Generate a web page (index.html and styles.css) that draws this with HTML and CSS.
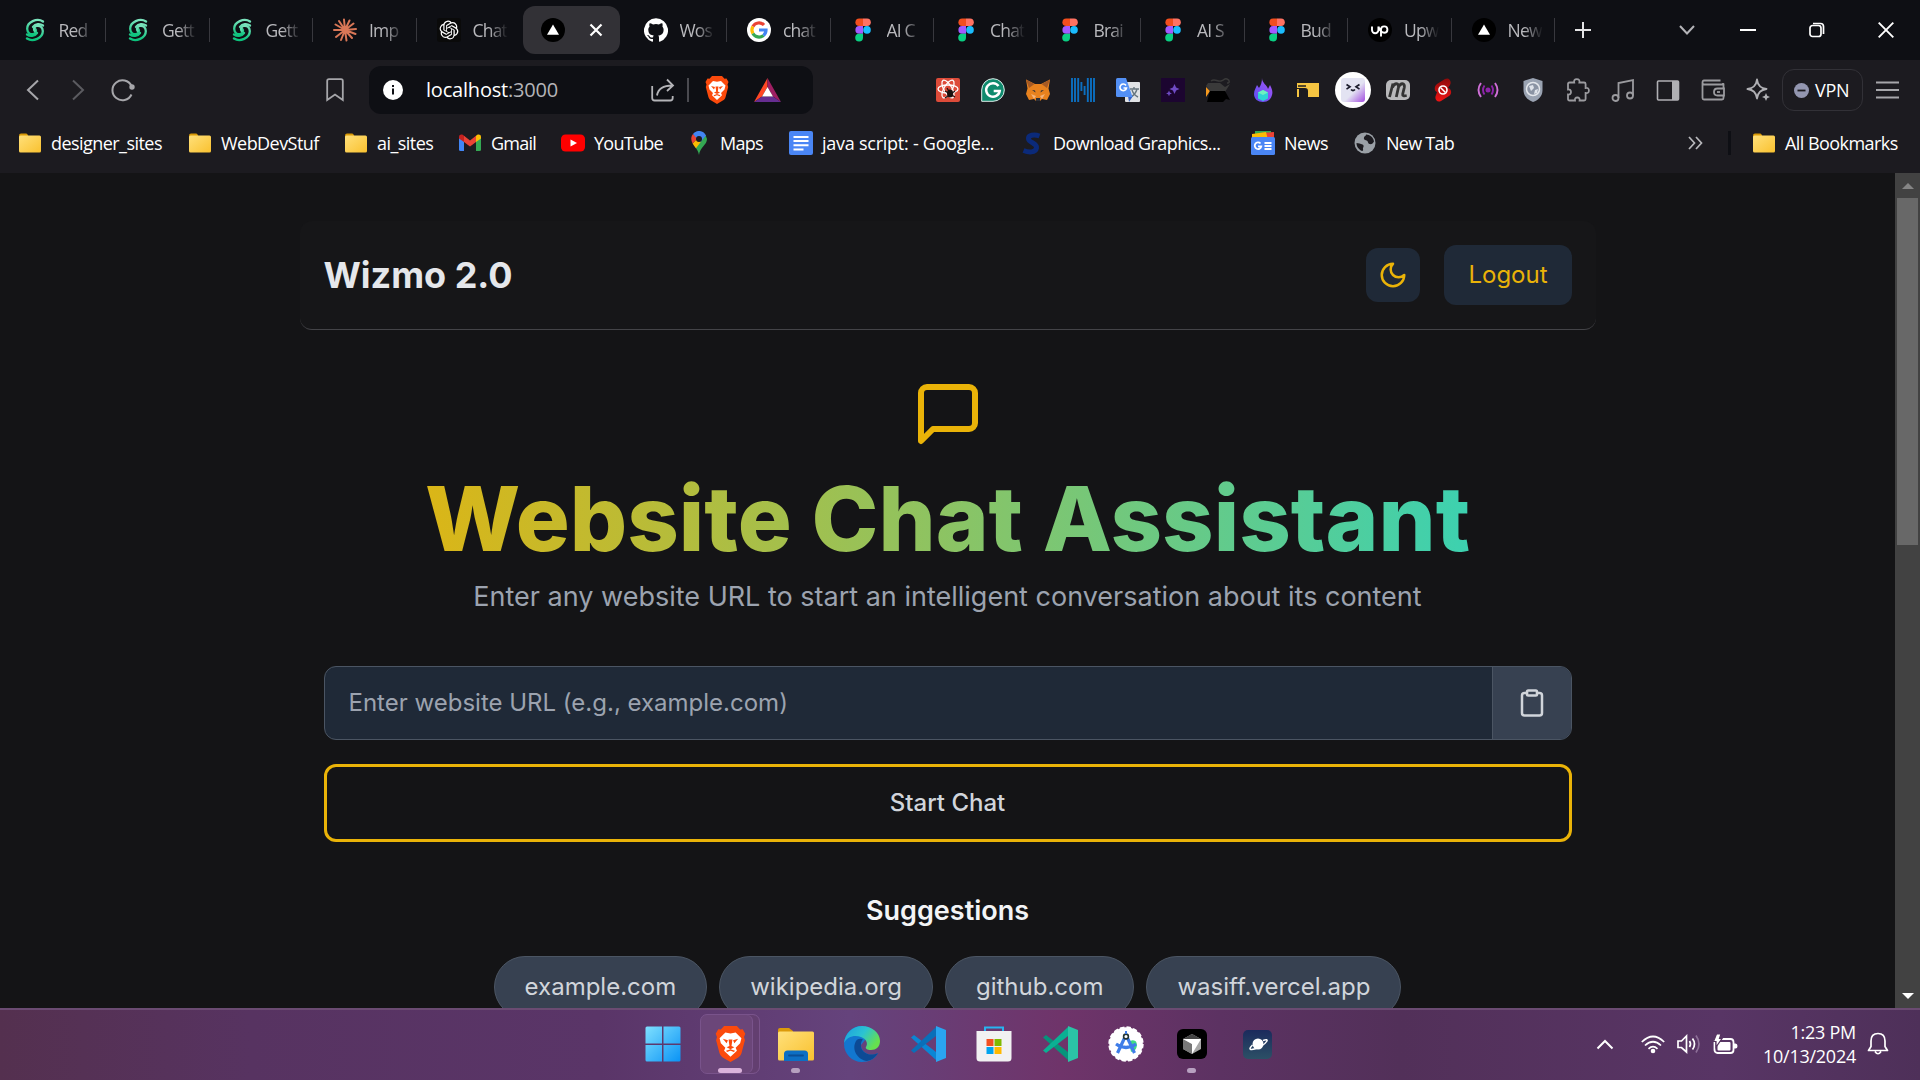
FILE: index.html
```html
<!DOCTYPE html>
<html lang="en">
<head>
<meta charset="utf-8">
<title>Wizmo 2.0</title>
<link rel="stylesheet" href="styles.css">
</head>
<body>
<svg class="defs" width="0" height="0">
  <defs>
    <linearGradient id="gGreen" x1="0" y1="0" x2="0" y2="1"><stop offset="0" stop-color="#7be3bd"/><stop offset="1" stop-color="#0bc27c"/></linearGradient>
    <linearGradient id="gFold" x1="0" y1="0" x2="1" y2="1"><stop offset="0" stop-color="#ffe07a"/><stop offset="1" stop-color="#f9c12f"/></linearGradient>
    <linearGradient id="gWin" x1="0" y1="0" x2="1" y2="1"><stop offset="0" stop-color="#7fe0ff"/><stop offset="1" stop-color="#0a93f5"/></linearGradient>
    <linearGradient id="gEdge" x1="0" y1="0" x2="1" y2=".5"><stop offset="0" stop-color="#1c9de0"/><stop offset=".55" stop-color="#2bc3d2"/><stop offset="1" stop-color="#66e04e"/></linearGradient>
    <linearGradient id="gFlame" x1="1" y1="0" x2="0" y2="1"><stop offset="0" stop-color="#a855f7"/><stop offset="1" stop-color="#5b4ff0"/></linearGradient>
    <linearGradient id="gBot" x1="0" y1="0" x2="1" y2="1"><stop offset=".55" stop-color="#e3e3f2"/><stop offset="1" stop-color="#a24be0"/></linearGradient>
    <linearGradient id="gSky" x1="0" y1="0" x2="0" y2="1"><stop offset="0" stop-color="#1b2a5c"/><stop offset="1" stop-color="#2c5066"/></linearGradient>
    <linearGradient id="gRed" x1="0" y1="0" x2="0" y2="1"><stop offset="0" stop-color="#8d0a0a"/><stop offset="1" stop-color="#f01313"/></linearGradient>
    <symbol id="swirl" viewBox="0 0 24 24"><g fill="none" stroke="url(#gGreen)" stroke-width="2.3" stroke-linecap="round"><path d="M20 3.500C14-.5 4 4 4.200 11c.1 3.800 3.300 6 6.300 5 2.600-.9 3-3.600 1.800-5"/><path d="M4 20.500c6 4 16-.5 15.800-7.500-.1-3.800-3.300-6-6.300-5-2.600.9-3 3.600-1.800 5"/><path d="M20 7.500c-3-2-7.500-2-10 1.500M4 16.500c3 2 7.500 2 10-1.500"/></g></symbol>
    <symbol id="claude" viewBox="0 0 24 24"><g stroke="#d97757" stroke-width="2" stroke-linecap="round"><path d="M12 12 11 1.500M12 12l4.500-9.500M12 12l8.500-6.500M12 12l11-1M12 12l10.500 4M12 12l7 8M12 12l1.500 10.500M12 12l-4 10M12 12l-9 7M12 12H1M12 12 2.500 6.500M12 12 6 3"/></g></symbol>
    <symbol id="gpt" viewBox="0 0 24 24"><rect width="24" height="24" rx="3" fill="#0a0a0a"/><g fill="#fff" transform="translate(2.600 2.600) scale(.783)"><path d="M22.280 9.820a5.980 5.980 0 0 0-.52-4.910 6.050 6.050 0 0 0-6.510-2.900A6.070 6.070 0 0 0 4.980 4.180a5.980 5.980 0 0 0-4 2.900 6.050 6.050 0 0 0 .74 7.100 5.980 5.980 0 0 0 .51 4.910 6.050 6.050 0 0 0 6.510 2.900A5.980 5.980 0 0 0 13.260 24a6.060 6.060 0 0 0 5.770-4.210 5.990 5.990 0 0 0 4-2.900 6.060 6.060 0 0 0-.75-7.070zm-9.020 12.610a4.480 4.480 0 0 1-2.880-1.040l.14-.08 4.780-2.760a.79.79 0 0 0 .39-.68v-6.740l2.020 1.170a.07.07 0 0 1 .04.05v5.580a4.500 4.500 0 0 1-4.490 4.490zm-9.660-4.130a4.470 4.470 0 0 1-.53-3.010l.14.090 4.780 2.760a.77.77 0 0 0 .78 0l5.840-3.370v2.330a.08.08 0 0 1-.03.06L9.740 19.950a4.500 4.500 0 0 1-6.140-1.650zM2.340 7.900a4.490 4.490 0 0 1 2.370-1.970V11.600a.77.77 0 0 0 .39.680l5.810 3.350-2.020 1.170a.08.08 0 0 1-.07 0l-4.830-2.790A4.500 4.500 0 0 1 2.340 7.900zm16.600 3.860L13.100 8.360l2.020-1.160a.08.08 0 0 1 .07 0l4.830 2.790a4.490 4.490 0 0 1-.68 8.100v-5.680a.79.79 0 0 0-.4-.65zm2.010-3.020l-.14-.09-4.770-2.780a.78.78 0 0 0-.79 0L9.410 9.230V6.900a.07.07 0 0 1 .03-.06l4.830-2.790a4.500 4.500 0 0 1 6.680 4.690zM8.310 12.860l-2.020-1.160a.08.08 0 0 1-.04-.06V6.070a4.500 4.500 0 0 1 7.380-3.450l-.14.080-4.780 2.760a.79.79 0 0 0-.4.680zm1.100-2.360l2.600-1.500 2.610 1.500v3l-2.600 1.500-2.610-1.500z"/></g></symbol>
    <symbol id="vercel" viewBox="0 0 24 24"><circle cx="12" cy="12" r="12" fill="#000"/><path d="M12 6.500l6 10.300H6z" fill="#fff"/></symbol>
    <symbol id="github" viewBox="0 0 24 24"><path fill="#fff" d="M12 .3a12 12 0 0 0-3.800 23.400c.6.1.8-.3.8-.6v-2.200c-3.300.7-4-1.400-4-1.400-.6-1.400-1.400-1.800-1.400-1.800-1-.7.1-.7.1-.7 1.200.1 1.900 1.200 1.900 1.200 1 1.800 2.800 1.300 3.500 1 0-.8.400-1.300.700-1.600-2.700-.3-5.500-1.300-5.500-6 0-1.200.5-2.300 1.300-3.100-.2-.4-.6-1.600 0-3.200 0 0 1-.3 3.400 1.200a11.500 11.500 0 0 1 6 0c2.300-1.500 3.300-1.200 3.300-1.200.6 1.600.2 2.800.1 3.200.7.8 1.200 1.900 1.200 3.200 0 4.600-2.800 5.600-5.500 5.900.5.400.9 1.100.9 2.200v3.300c0 .3.100.7.800.6A12 12 0 0 0 12 .3"/></symbol>
    <symbol id="google" viewBox="0 0 24 24"><circle cx="12" cy="12" r="12" fill="#fff"/><g fill="none" stroke-width="3.200"><path stroke="#ea4335" d="M5.900 8.500A7 7 0 0 1 17 7"/><path stroke="#fbbc05" d="M5.900 15.500a7 7 0 0 1 0-7"/><path stroke="#34a853" d="M16.500 17.400a7 7 0 0 1-10.600-1.900"/><path stroke="#4285f4" d="M12 12h7c0 2.400-1 4.200-2.500 5.400"/></g></symbol>
    <symbol id="figma" viewBox="0 0 24 24"><path fill="#f24e1e" d="M12 .5H8.200a3.800 3.800 0 0 0 0 7.600H12z"/><path fill="#ff7262" d="M12 .5h4a3.800 3.800 0 0 1 0 7.600h-4z"/><path fill="#a259ff" d="M12 8.100H8.200a3.800 3.800 0 0 0 0 7.600H12z"/><circle cx="16" cy="11.900" r="3.800" fill="#1abcfe"/><path fill="#0acf83" d="M12 15.700H8.200a3.900 3.900 0 1 0 3.800 3.900z"/></symbol>
    <symbol id="folder" viewBox="0 0 24 24"><path fill="#d99a07" d="M1 4.500q0-2 2-2h5q1 0 1.500 1l1 2v3H1z"/><rect x="1" y="4.500" width="22" height="17" rx="1.500" fill="url(#gFold)"/></symbol>
    <symbol id="brave" viewBox="0 0 24 28"><path fill="#fb4a0c" d="M7 0h10l2.500 2.800 2-.3 2 3.500-1 2.500.7 2.500-2.600 10c-.5 1.800-1.500 2.800-2.800 3.600L12 28l-5.800-3.400C5 23.800 4 22.800 3.400 21L.8 11l.7-2.500L.5 6l2-3.500 2 .3z"/><path fill="#fff" d="M8 5l4 .8L16 5l4.500 4.500-1 4-3.500 3.500 1 2.200-5 4.800-5-4.800 1-2.200L4.500 13.500l-1-4z"/><path fill="#fb4a0c" d="M6 10l4 1-1 2.500zM18 10l-4 1 1 2.500zM10.500 10.500h3l-.7 5 2.200 1-3 1.500-3-1.500 2.200-1zM8.500 19.300l3.500-1.200 3.500 1.200-.8.900-2.700-.9-2.700.9z"/></symbol>
    <symbol id="vscode" viewBox="0 0 36 36"><path class="vs-a" d="M1 11.500l3-2.500 22 17v8z"/><path class="vs-b" d="M1 24.500L4 27 26 10V1z"/><path class="vs-c" d="M26 0l10 4v28l-10 4z"/></symbol>
  </defs>
</svg>

<div class="screen">
  <header class="tabstrip">
    <div class="tab"><svg class="i24"><use href="#swirl"/></svg><span>Red</span></div>
    <div class="tab"><svg class="i24"><use href="#swirl"/></svg><span>Gett</span></div>
    <div class="tab"><svg class="i24"><use href="#swirl"/></svg><span>Gett</span></div>
    <div class="tab"><svg class="i24"><use href="#claude"/></svg><span>Imp</span></div>
    <div class="tab no-line"><svg class="i24"><use href="#gpt"/></svg><span>Chat</span></div>
    <div class="tab active"><div class="pill"><svg class="i24"><use href="#vercel"/></svg><svg width="14" height="14" viewBox="0 0 14 14"><path d="M1.500 1.500l11 11m0-11l-11 11" stroke="#fff" stroke-width="2.200"/></svg></div></div>
    <div class="tab"><svg class="i24"><use href="#github"/></svg><span>Wos</span></div>
    <div class="tab"><svg class="i24"><use href="#google"/></svg><span>chat</span></div>
    <div class="tab"><svg class="i24"><use href="#figma"/></svg><span>AI C</span></div>
    <div class="tab"><svg class="i24"><use href="#figma"/></svg><span>Chat</span></div>
    <div class="tab"><svg class="i24"><use href="#figma"/></svg><span>Brai</span></div>
    <div class="tab"><svg class="i24"><use href="#figma"/></svg><span>AI S</span></div>
    <div class="tab"><svg class="i24"><use href="#figma"/></svg><span>Bud</span></div>
    <div class="tab"><svg class="i24" viewBox="0 0 24 24"><circle cx="12" cy="12" r="12" fill="#000"/><path d="M4 8.500v3.500a3.200 3.200 0 0 0 6.400 0V8.500m0 0c1 3 2 4.500 3.500 6M13 18.500v-7a3.200 3.200 0 1 1 3.200 3.300c-1.500 0-3-1-4-2.500" fill="none" stroke="#fff" stroke-width="1.900"/></svg><span>Upw</span></div>
    <div class="tab"><svg class="i24"><use href="#vercel"/></svg><span>New</span></div>
    <button class="newtab"><svg width="18" height="18" viewBox="0 0 18 18"><path d="M9 1v16M1 9h16" stroke="#e4e4e6" stroke-width="2"/></svg></button>
    <div class="win">
      <button class="w54"><svg width="16" height="10" viewBox="0 0 16 10"><path d="M1 1l7 7.500L15 1" fill="none" stroke="#b4b4b8" stroke-width="2"/></svg></button>
      <button><svg width="16" height="4"><rect y="1" width="16" height="2" fill="#fff"/></svg></button>
      <button><svg width="16" height="16" viewBox="0 0 16 16"><g fill="none" stroke="#fff" stroke-width="1.700"><rect x="1" y="3.500" width="11" height="11" rx="2.500"/><path d="M4 1.500h7.500q3 0 3 3V12"/></g></svg></button>
      <button><svg width="16" height="16" viewBox="0 0 16 16"><path d="M.7.7l14.600 14.600m0-14.600L.7 15.300" stroke="#fff" stroke-width="1.900"/></svg></button>
    </div>
  </header>

  <div class="toolbar">
    <div class="slot"><svg width="14" height="22" viewBox="0 0 14 22"><path d="M12 1.500L2 11l10 9.500" fill="none" stroke="#a6a6aa" stroke-width="2"/></svg></div>
    <div class="slot"><svg width="14" height="22" viewBox="0 0 14 22"><path d="M2 1.500L12 11 2 20.500" fill="none" stroke="#5b5b60" stroke-width="2"/></svg></div>
    <div class="slot"><svg width="24" height="24" viewBox="0 0 24 24"><path d="M20.500 16.500A10 10 0 1 1 20.500 8" fill="none" stroke="#a6a6aa" stroke-width="2"/><circle cx="21" cy="9" r="2.700" fill="#a6a6aa"/></svg></div>
    <div class="slot mark"><svg width="18" height="24" viewBox="0 0 18 24"><path d="M1.200 3q0-1.800 1.800-1.800h12q1.800 0 1.800 1.800v19L9 16.500 1.200 22z" fill="none" stroke="#a6a6aa" stroke-width="1.800"/></svg></div>
    <div class="url">
      <svg width="20" height="20" viewBox="0 0 20 20"><circle cx="10" cy="10" r="10" fill="#fff"/><path d="M10 8.500v6M10 5v2" stroke="#0f1015" stroke-width="2"/></svg>
      <span class="host">localhost<i>:3000</i></span>
      <svg class="share" width="24" height="24" viewBox="0 0 24 24"><path d="M1.200 8v12q0 2.500 2.500 2.500h15.500q2.500 0 2.500-2.500v-2M6 17.500C7 11 11 7.500 21.500 7.500M16 1.500l6 6-6 5.500" fill="none" stroke="#b4b4b8" stroke-width="1.800"/></svg>
      <b class="bar"></b>
      <svg width="24" height="28"><use href="#brave"/></svg>
      <svg class="bat" width="27" height="24" viewBox="0 0 27 24"><path fill="#ff4724" d="M13.500 0v9L8 18.500 0 24z"/><path fill="#9e1f63" d="M13.500 0L27 24l-8-5.500L13.500 9z"/><path fill="#662d91" d="M0 24l8-5.500h11L27 24z"/><path fill="#fff" d="M13.500 9l5.500 9.500H8z"/></svg>
    </div>
    <div class="ext">
      <div class="slot"><svg class="i24" viewBox="0 0 24 24"><rect width="24" height="24" rx="2" fill="#dd4b39"/><g fill="none" stroke="#fff" stroke-width="1.300"><ellipse cx="12" cy="11" rx="10" ry="4"/><ellipse cx="12" cy="11" rx="10" ry="4" transform="rotate(60 12 11)"/><ellipse cx="12" cy="11" rx="10" ry="4" transform="rotate(120 12 11)"/></g><ellipse cx="14" cy="15.500" rx="3" ry="4" fill="#1b1210"/><path d="M9 13l10 6M9 20l10-7M11 10l3 5" stroke="#1b1210" stroke-width="1.200"/></svg></div>
      <div class="slot"><svg class="i24" viewBox="0 0 24 24"><path d="M.7 23.300V12A11.300 11.300 0 1 1 12 23.300z" fill="#0e8a6d" stroke="#dfeeea" stroke-width="1"/><path d="M17.500 8A6.800 6.800 0 1 0 18.700 13h-6" fill="none" stroke="#fff" stroke-width="2.500"/></svg></div>
      <div class="slot"><svg class="i24" viewBox="0 0 24 24"><path fill="#e8821e" d="M0 1.500L9 6h6l9-4.500-1.500 9L24 16l-3 6-5-1-2 2h-4l-2-2-5 1-3-6 1.500-5.500z"/><path fill="#a65a24" d="M0 1.500L8.500 6 3 10zM24 1.500L15.500 6 21 10z"/><path fill="#f3b27a" d="M5 16l5 2-2 3zM19 16l-5 2 2 3z"/><path fill="#2d3038" d="M6 12l3 .5.5 2zM18 12l-3 .5-.5 2zM10 20h4v3h-4z"/></svg></div>
      <div class="slot"><svg class="i24" viewBox="0 0 24 24"><path d="M1 0v24M4 0v24M7.200 0v24M10.400 4v9M13.600 8v9M16.800 0v24M20 0v24M23 0v24" stroke="#0c6fc0" stroke-width="1.900"/></svg></div>
      <div class="slot"><svg class="i24" viewBox="0 0 24 24"><rect x="9" y="4" width="15" height="20" rx="1" fill="#e0e2e5"/><path d="M14 11h9M18 9v2m3 0c-1 4-3 6-6 8m1-7c1 3 4 6 6 7" stroke="#66757f" stroke-width="1.400" fill="none"/><path fill="#3563c8" d="M12 18h5l-4 6z"/><path fill="#5390f5" d="M1.500 0H10l6.500 19h-15Q0 19 0 17.500v-16Q0 0 1.500 0z"/><path d="M10 7.500A3.300 3.300 0 1 0 10.500 10H7.500" fill="none" stroke="#fff" stroke-width="1.600"/></svg></div>
      <div class="slot"><svg class="i24" viewBox="0 0 24 24"><rect width="24" height="24" fill="#1c0530"/><path fill="#6f4bc4" d="M13.500 6l1.600 3.400 3.400 1.600-3.400 1.600-1.600 3.400-1.600-3.400L8.500 11l3.400-1.600zM8 12.500l.9 2 2 .9-2 .9-.9 2-.9-2-2-.9 2-.9z"/></svg></div>
      <div class="slot"><svg class="i24" viewBox="0 0 24 24"><path fill="#f79a1e" d="M0 9l4 4-4 6z"/><path fill="#3a3a3a" d="M2 5h12l5 4 5-3-5 8H5L0 8z"/><path fill="#000" d="M4 13h15l5 9-4-1-3 3H1z"/><path d="M5 3c4-3 6 1 10 0s3-3 6-2 3 4 0 4" fill="none" stroke="#3a3a3a" stroke-width="1.400"/></svg></div>
      <div class="slot"><svg class="i24" viewBox="0 0 24 24"><path fill="url(#gFlame)" d="M11 0c0 5 5 7 6 11l2-4c2 4 3 7 2 10-1 4-4 7-9 7s-9-3-9-8c0-4 2-6 3-9l2 3c2-3 3-6 3-10z"/><path fill="#2dd4d4" d="M12 12l5 2.500v6L12 23l-5-2.500v-6z"/><path fill="#6ef0c0" d="M12 12l5 2.500-5 2.500-5-2.500z"/></svg></div>
      <div class="slot"><svg class="i24" viewBox="0 0 24 24"><path fill="#f5c542" d="M1 5h22v14H12v-6q0-3-3-3H1z"/><path d="M2 8h8m-5.500 11v-4q0-3 3-3t3 3v4" fill="none" stroke="#1c1c20" stroke-width="1.600"/><path fill="#f5c542" d="M1 11h2v8H1z"/></svg></div>
      <div class="slot"><svg class="i36" viewBox="0 0 36 36"><circle cx="18" cy="18" r="18" fill="#fff"/><rect x="6" y="6" width="24" height="24" rx="3" fill="url(#gBot)"/><path d="M11.500 12.500l3.500 2.300-3.500 2.300M24.500 12.500L21 14.800l3.500 2.300M16 17.500q2 2 4 0" fill="none" stroke="#1c1c2c" stroke-width="1.700"/></svg></div>
      <div class="slot"><svg class="i24" viewBox="0 0 24 24"><rect y="2" width="24" height="20" rx="5" fill="#b9b9bb"/><path d="M3.500 19L7 5.500m-.6 4c2-5 7-5 6 0L10.300 19m2-9.500c2-5 7-5 6 0l-1.600 6.500q-.5 2.500 4 1.500" fill="none" stroke="#333" stroke-width="2.800"/></svg></div>
      <div class="slot"><svg class="i24" viewBox="0 0 24 24"><path fill="url(#gRed)" d="M14 1c4-2 7 2 5 6l-2 3c4 1 4 6 1 8l-8 5c-4 2-7-2-5-6l1-3c-3-1-3-6 0-8z"/><circle cx="12" cy="12" r="4" fill="none" stroke="#fff" stroke-width="1.600"/><path d="M9.500 9.500l5 5" stroke="#fff" stroke-width="1.500"/></svg></div>
      <div class="slot"><svg class="i24" viewBox="0 0 24 24"><circle cx="12" cy="12" r="2.500" fill="#8e24aa"/><g fill="none" stroke-width="1.900"><path stroke="#8e24aa" d="M8.500 7.500q-3 4.500 0 9M15.500 7.500q3 4.500 0 9"/><path stroke="#d070d8" d="M5 5q-5 7 0 14M19 5q5 7 0 14"/></g></svg></div>
      <div class="slot"><svg class="i24" viewBox="0 0 24 24"><path fill="#9aa3b2" d="M12 0l9.500 3v9c0 6-4 10-9.500 12C6.500 22 2.500 18 2.500 12V3z"/><circle cx="12" cy="11" r="6.500" fill="#8b94a4" stroke="#e4e7ec" stroke-width="1.500"/><path fill="#dfe3ea" d="M8 8l4-1 1 3-3 3zM14 12l3-1-1 4-3 1z"/></svg></div>
      <div class="slot"><svg class="i24" viewBox="0 0 24 24"><path d="M2 6q0-1.500 1.500-1.500h4.700q-.7-3.300 2.600-3.300t2.600 3.300h4.700q1.500 0 1.500 1.500v4q3.300-.5 3.300 2.500t-3.300 2.500v6q0 1.500-1.500 1.500h-4.500q.5-3-2.300-3t-2.300 3H3.500Q2 22.500 2 21v-4.500q3 .3 3-2.500t-3-2.500z" fill="none" stroke="#9b9b9f" stroke-width="1.800"/></svg></div>
      <div class="slot"><svg class="i24" viewBox="0 0 24 24"><g fill="none" stroke="#9b9b9f" stroke-width="1.800"><circle cx="4.500" cy="20" r="3"/><circle cx="19" cy="17.500" r="3"/><path d="M7.500 20V5L22 2v15.500"/></g></svg></div>
      <div class="slot"><svg class="i24" viewBox="0 0 24 24"><rect x="1.500" y="3" width="21" height="19" rx="1" fill="none" stroke="#b0b0b4" stroke-width="1.600"/><path fill="#b0b0b4" d="M16 3h6.500v19H16z"/></svg></div>
      <div class="slot"><svg class="i24" viewBox="0 0 24 24"><g fill="none" stroke="#9b9b9f" stroke-width="1.800"><path d="M22 7.500V5M19.500 2.500H3q-1.500 0-1.500 2t1.500 2h19.500v4M1.500 4.500V20q0 1.500 1.500 1.500h18q1.500 0 1.500-1.500v-2.500"/><path d="M23 10.500h-6.500q-3.500 0-3.500 3.500t3.500 3.500H23z"/><path d="M16 14h3"/></g></svg></div>
      <div class="slot"><svg class="i24" viewBox="0 0 24 24"><path d="M11 1.500q1 8.500 9.500 9.500-8.500 1-9.500 9.500Q10 12 1.500 11 10 10 11 1.500z" fill="none" stroke="#b0b0b4" stroke-width="1.900" stroke-linejoin="round"/><path fill="#b0b0b4" d="M20 15l1.200 2.800L24 19l-2.800 1.200L20 23l-1.200-2.800L16 19l2.800-1.200z"/></svg></div>
    </div>
    <div class="vpn"><svg width="15" height="15"><circle cx="7.500" cy="7.500" r="7.500" fill="#9396b0"/><path d="M3.500 7.500h8" stroke="#1c1b20" stroke-width="1.800"/></svg><span>VPN</span></div>
    <div class="slot"><svg width="23" height="18"><path d="M0 1.500h23M0 9h23M0 16.500h23" stroke="#a6a6aa" stroke-width="2"/></svg></div>
  </div>

  <nav class="bookmarks">
    <a><svg class="i24"><use href="#folder"/></svg><span>designer_sites</span></a>
    <a><svg class="i24"><use href="#folder"/></svg><span>WebDevStuf</span></a>
    <a><svg class="i24"><use href="#folder"/></svg><span>ai_sites</span></a>
    <a><svg class="i24" viewBox="0 0 24 24"><path fill="#4285f4" d="M1 6l5 3.500V20H2.500Q1 20 1 18.500z"/><path fill="#34a853" d="M23 6l-5 3.500V20h3.500q1.500 0 1.500-1.500z"/><path fill="#ea4335" d="M6 4.800l6 4.600 6-4.600v6.200l-6 4.500L6 11z"/><path fill="#c5221f" d="M1 6c0-2.500 2.500-3 4-2l1 .8V11L1 7.500z"/><path fill="#fbbc04" d="M23 6c0-2.500-2.500-3-4-2l-1 .8V11l5-3.500z"/></svg><span class="snug">Gmail</span></a>
    <a><svg class="i24" viewBox="0 0 24 24"><rect y="3.500" width="24" height="17" rx="4.500" fill="#f00"/><path fill="#fff" d="M9.500 8.500v7l6.500-3.500z"/></svg><span class="snug">YouTube</span></a>
    <a><svg class="i24" viewBox="0 0 24 24"><path fill="#34a853" d="M20 8c0 6-7 8-8 16-.5-3-2-5.500-3.700-7.700L18.500 4z"/><path fill="#fbbc04" d="M9 17.200c-1.200-1.500-2.500-3-3.400-4.700l5-5.500 3.500 3.500z"/><path fill="#ea4335" d="M5.600 12.500C4 9 3.500 6 6 3l5 4z"/><path fill="#4285f4" d="M6 3c3.500-4.500 10.500-4 13 1.500L13.500 11 9 6.500z"/><circle cx="12" cy="8" r="3" fill="#1c1b20"/></svg><span class="snug">Maps</span></a>
    <a><svg class="i24" viewBox="0 0 24 24"><rect width="24" height="24" rx="2" fill="#4a86f5"/><path d="M4.500 6h15M4.500 10h15M4.500 14.300h15M4.500 18.500h10" stroke="#fff" stroke-width="2"/></svg><span class="loose">java script: - Google...</span></a>
    <a><svg class="i24" viewBox="0 0 24 24"><path d="M19.500 5C14 3 8 4 8.500 8s9 4 8 9-8 4.500-13 2.500" fill="none" stroke="#0b2a7a" stroke-width="5"/></svg><span>Download Graphics...</span></a>
    <a><svg class="i24" viewBox="0 0 24 24"><path fill="#34a853" d="M4 0h16v6H4z"/><path fill="#ea4335" d="M9 2l14-1v8H9z"/><path fill="#fbbc04" d="M1 3l14-2 2 8H1z"/><rect y="6" width="24" height="18" rx="1.500" fill="#4a86f5"/><path d="M9.500 12.500a3.300 3.300 0 1 0 .8 2.800H7M13.500 12h7M13.500 15h7M13.500 18h7" fill="none" stroke="#fff" stroke-width="1.800"/></svg><span>News</span></a>
    <a class="newtab-mark"><svg class="i24" viewBox="0 0 24 24"><circle cx="12" cy="12" r="10.500" fill="#9aa0a6"/><path fill="#1c1b20" d="M13 3.500c4 0 7.500 3 8 7-1 2-2.500 3-4.500 2.500s-1-3-3-3.500-3-1-2.500-3 2-1 2-3zM3.500 12c2 0 4 .5 6 1.500 2.500 1.500 0 3 .5 4.500s-.5 2-1 2C6 18.500 3.500 16 3.500 12z"/></svg><span class="snug">New Tab</span></a>
    <div class="more"><svg width="15" height="14" viewBox="0 0 15 14"><path d="M1 1l5.500 6L1 13M8 1l5.500 6L8 13" fill="none" stroke="#b8b8bc" stroke-width="1.700"/></svg></div>
    <a class="all"><svg class="i24"><use href="#folder"/></svg><span>All Bookmarks</span></a>
  </nav>

  <div class="viewport">
    <main>
      <div class="app-header">
        <h2>Wizmo 2.0</h2>
        <button class="theme"><svg width="30" height="30" viewBox="0 0 24 24" fill="none" stroke="#eab308" stroke-width="2" stroke-linecap="round" stroke-linejoin="round"><path d="M12 3a6 6 0 0 0 9 9 9 9 0 1 1-9-9Z"/></svg></button>
        <button class="logout">Logout</button>
      </div>
      <svg class="chat" width="72" height="72" viewBox="0 0 24 24" fill="none" stroke="#eab308" stroke-width="2" stroke-linecap="round" stroke-linejoin="round"><path d="M21 15a2 2 0 0 1-2 2H7l-4 4V5a2 2 0 0 1 2-2h14a2 2 0 0 1 2 2z"/></svg>
      <h1>Website Chat Assistant</h1>
      <p class="sub">Enter any website URL to start an intelligent conversation about its content</p>
      <div class="field">
        <span>Enter website URL (e.g., example.com)</span>
        <button><svg width="30" height="30" viewBox="0 0 24 24" fill="none" stroke="#d1d5db" stroke-width="2" stroke-linecap="round" stroke-linejoin="round"><rect x="8" y="2" width="8" height="4" rx="1"/><path d="M16 4h2a2 2 0 0 1 2 2v14a2 2 0 0 1-2 2H6a2 2 0 0 1-2-2V6a2 2 0 0 1 2-2h2"/></svg></button>
      </div>
      <button class="start">Start Chat</button>
      <h3>Suggestions</h3>
      <div class="chips"><span>example.com</span><span>wikipedia.org</span><span>github.com</span><span>wasiff.vercel.app</span></div>
    </main>
    <div class="scroll">
      <svg width="12" height="6"><path d="M0 6l6-6 6 6z" fill="#858585"/></svg>
      <div class="thumb"></div>
      <svg width="12" height="6"><path d="M0 0l6 6 6-6z" fill="#fff"/></svg>
    </div>
  </div>

  <footer class="taskbar">
    <div class="apps">
      <div><svg width="36" height="36" viewBox="0 0 36 36"><path fill="url(#gWin)" d="M2 .5h15v17H.5V2Q.5.500 2 .500zM18.500.500H34q1.500 0 1.500 1.500v15.500h-17zM.5 19H17v16.500H2Q.5 35.500.5 34zM18.500 19h17v15q0 1.500-1.500 1.500H18.500z"/></svg></div>
      <div class="current"><svg width="31" height="36"><use href="#brave"/></svg><b></b></div>
      <div class="open"><svg width="36" height="36" viewBox="0 0 36 36"><path fill="#dc9a0a" d="M0 4q0-2 2-2h9l4 3v4H0z"/><rect y="5.500" width="36" height="29" rx="1.500" fill="url(#gFold)"/><path fill="#0d6fc4" d="M6 35v-7q0-3.500 3.500-3.500h17q3.500 0 3.500 3.500v7z"/><path d="M11 29.500h14" stroke="#0a4f96" stroke-width="1.800" stroke-linecap="round"/></svg><b></b></div>
      <div><svg width="36" height="36" viewBox="0 0 36 36"><path fill="#1277cf" d="M18 0A18 18 0 0 0 0 18c0 10 8 18 18 18 7 0 13-3 16-9-8 5-17-1-17-8L26 8z"/><path fill="#0c4a95" d="M12 15c-5 9 2 19 11 20 5-.8 9-4 11-8-9 4.500-18-1-17-9 0-3 2-4.500 2-4.500-3-1.500-5.500-.5-7 1.500z"/><path fill="url(#gEdge)" d="M0 17C1 7 9 0 18 0c10 0 18 7 18 15 0 6-4 9-9 9-4 0-6-1.500-5-3 2-3 1-8-5-10C10 8.500 3 11 0 17z"/></svg></div>
      <div class="vs-blue"><svg width="36" height="36"><use href="#vscode"/></svg></div>
      <div><svg width="36" height="36" viewBox="0 0 36 36"><path d="M9 8V1.500h18V8" fill="none" stroke="#27b4f0" stroke-width="2"/><path fill="#f1f1f2" d="M.5 5h35v27q0 3.500-3.500 3.500H4Q.5 35.500.5 32z"/><path fill="#f25022" d="M10.500 13h7v7h-7z"/><path fill="#7fba00" d="M18.500 13h7v7h-7z"/><path fill="#00a4ef" d="M10.500 21h7v7h-7z"/><path fill="#ffb900" d="M18.500 21h7v7h-7z"/></svg></div>
      <div class="vs-green"><svg width="36" height="36"><use href="#vscode"/></svg></div>
      <div><svg width="36" height="36" viewBox="0 0 36 36"><circle cx="18" cy="18" r="16.800" fill="#fff" stroke="#fff" stroke-width="1.800" stroke-dasharray="4.400 2.200"/><path fill="#3ddc84" d="M21 16q3-3 7-.5 2 4-.5 8L23 26z"/><path d="M17 11L9.500 27M19 11l7.500 16M8 18q10 7 20 0" fill="none" stroke="#3f7de8" stroke-width="3.200"/><circle cx="18" cy="10.500" r="2.400" fill="#fff" stroke="#233" stroke-width="1.600"/><path d="M18 5v3" stroke="#3f7de8" stroke-width="2"/></svg></div>
      <div class="open"><svg width="30" height="30" viewBox="0 0 30 30"><rect width="30" height="30" rx="6" fill="#000"/><path fill="#a8a8a8" d="M15 5l9 5v10l-9 5-9-5V10z"/><path fill="#444" d="M15 5l9 5H6z"/><path fill="#777" d="M6 10l9 5v10l-9-5z"/><path fill="#fff" d="M6 10h18l-9 15V15z"/></svg><b></b></div>
      <div><svg width="29" height="29" viewBox="0 0 29 29"><rect width="29" height="29" rx="5" fill="url(#gSky)"/><circle cx="15" cy="14" r="5.500" fill="#fff"/><path d="M9.500 15c-7 7 2 4.500 8 1.500s10-9 2.500-6" fill="none" stroke="#fff" stroke-width="1.500"/></svg></div>
    </div>
    <div class="tray">
      <svg class="up" width="18" height="11" viewBox="0 0 18 11"><path d="M1.500 9.500L9 2l7.500 7.500" fill="none" stroke="#fff" stroke-width="2"/></svg>
      <svg class="wifi" width="24" height="19" viewBox="0 0 24 19"><g fill="none" stroke="#fff" stroke-width="1.700"><path d="M.8 7Q12-4 23.200 7M4 10.500q8-7.500 16 0M7.500 13.800q4.500-4.300 9 0"/></g><circle cx="12" cy="16" r="2.300" fill="#fff"/></svg>
      <svg class="vol" width="25" height="20" viewBox="0 0 25 20"><g fill="none" stroke="#fff" stroke-width="1.700"><path d="M1 7v6.500h3.500L9.500 18V2L4.500 7z"/><path d="M12.500 7q2 3 0 6M15.500 4.500q4 5.500 0 11"/><path d="M19 1.500q6 8.500 0 17" stroke="#8d6f98"/></g></svg>
      <svg class="bat2" width="25" height="21" viewBox="0 0 25 21"><rect x="1.500" y="5" width="19" height="14" rx="3" fill="none" stroke="#fff" stroke-width="1.800"/><rect x="4.500" y="8" width="13" height="8.500" rx="1" fill="#fff"/><path fill="#fff" d="M21 9.500h1.500q2 0 2 2.500t-2 2.500H21z"/><path fill="#fff" stroke="#56345f" stroke-width="1.200" d="M3.500 0H8L6.500 4.500H9L3 13V7.500H.5z"/></svg>
      <div class="clock"><span>1:23 PM</span><span>10/13/2024</span></div>
      <svg width="22" height="24" viewBox="0 0 22 24"><path d="M1.500 18.500l2.500-4V9q0-7.500 7-7.500T18 9v5.500l2.500 4zM8 19.500q3 4.500 6 0" fill="none" stroke="#fff" stroke-width="1.700" stroke-linejoin="round"/></svg>
    </div>
  </footer>
</div>
</body>
</html>
```
FILE: styles.css
```css
* { box-sizing: border-box; margin: 0; padding: 0; }
body { width: 1920px; height: 1080px; overflow: hidden; background: #141416; font-family: "Open Sans", "Noto Sans", sans-serif; font-size: 18px; color: #fff; }
button { background: none; border: 0; font: inherit; color: inherit; display: flex; align-items: center; justify-content: center; }
svg { display: block; flex: none; }
.defs { position: absolute; }
.screen { display: flex; flex-direction: column; height: 1080px; }
.i24 { width: 24px; height: 24px; }
.i36 { width: 36px; height: 36px; }

/* Tab strip */
.tabstrip { height: 60px; flex: none; background: #0e0f14; display: flex; align-items: center; padding-left: 2.5px; }
.tab { width: 103.5px; height: 24px; flex: none; display: flex; align-items: center; padding-left: 20px; gap: 12px; border-right: 1.5px solid #38383e; }
.tab span { width: 36px; padding-bottom: 1px; white-space: nowrap; color: #b9b9bd; font-size: 17.5px; letter-spacing: -.8px; mask-image: linear-gradient(90deg, #000 16px, transparent 35px); }
.tab.no-line, .tab.active { border-color: transparent; }
.tab.active { padding: 0 3.5px 0 3px; }
.pill { width: 97px; height: 48px; flex: none; border-radius: 12px; background: #323136; display: flex; align-items: center; padding-left: 18px; gap: 24px; }
.newtab { width: 54px; height: 60px; padding-left: 2px; }
.win { margin-left: auto; display: flex; }
.win button { width: 69px; height: 60px; }
.win .w54 { width: 54px; padding-left: 2px; }

/* Toolbar */
.toolbar { height: 60px; flex: none; background: #1c1b20; display: flex; align-items: center; padding-left: 10.5px; }
.slot { width: 45px; height: 45px; flex: none; display: flex; align-items: center; justify-content: center; }
.mark { margin-left: 167px; }
.url { width: 444px; height: 48px; flex: none; margin: 0 112.5px 0 11.5px; border-radius: 12px; background: #0e0f14; display: flex; align-items: center; padding-left: 14px; }
.host { width: 225px; margin-left: 23px; font-size: 20px; letter-spacing: -.2px; padding-bottom: 1px; }
.host i { font-style: normal; color: #b4b4b8; }
.bar { width: 1.5px; height: 24px; margin: 0 16px 0 12px; background: #4a4a50; }
.bat { margin-left: 25px; }
.ext { display: flex; }
.vpn { width: 81px; height: 42px; flex: none; margin: 0 1.5px; border: 1.5px solid #323137; border-radius: 12px; display: flex; align-items: center; padding-left: 11px; gap: 6px; letter-spacing: -.3px; }
.vpn span { padding-bottom: 1px; }

/* Bookmarks bar */
.bookmarks { height: 53px; flex: none; background: #1c1b20; display: grid; grid-template-columns: 170px 156px 114px 103px 126px 102px 231px 231px 103px 324px 50px 1fr; align-items: center; padding: 0 0 7px 18px; white-space: nowrap; }
.bookmarks a { display: flex; align-items: center; gap: 9px; letter-spacing: -.55px; }
.bookmarks span { padding-bottom: 1px; }
.bookmarks .snug { letter-spacing: -.75px; }
.bookmarks .loose { letter-spacing: -.25px; }
.newtab-mark svg { margin-left: -1px; }
.more { display: flex; padding-left: 10px; }
.all { height: 24px; border-left: 3px solid #0e0f14; padding-left: 21px; }

/* Page */
.viewport { flex: 1; min-height: 0; display: flex; overflow: hidden; background: #141416; font-family: Inter, sans-serif; font-size: 24px; }
main { flex: 1; display: flex; flex-direction: column; align-items: center; padding-top: 48px; }
.app-header { width: 1296px; height: 109px; flex: none; background: #161618; border-bottom: 1.5px solid #444448; border-radius: 12px; display: flex; align-items: center; padding: 0 24px; gap: 24px; }
.app-header h2 { font-size: 36px; font-weight: 700; color: #e5e7eb; margin-right: auto; }
.theme { width: 54px; height: 54px; border-radius: 12px; background: #1f2937; }
.logout { width: 128px; height: 60px; padding: 0 0 2px 1px; border-radius: 12px; background: #1f2937; color: #eab308; }
.chat { margin-top: 48px; }
h1 { width: 1248px; height: 90px; margin-top: 24px; text-align: center; font-size: 90px; line-height: 90px; font-weight: 800; white-space: nowrap; color: transparent; background: linear-gradient(90deg, #eab308, #2dd4bf); background-clip: text; -webkit-background-clip: text; }
.sub { margin-top: 12px; font-size: 27px; line-height: 42px; color: #9ca3af; white-space: nowrap; }
.field { width: 1248px; height: 74px; flex: none; margin-top: 48px; border: 1px solid #4b5563; border-radius: 12px; background: #1f2937; overflow: hidden; display: flex; align-items: center; padding-left: 24px; color: #9ca3af; }
.field span { padding-bottom: 2px; }
.field button { width: 79px; height: 100%; margin-left: auto; background: #374151; border-left: 1px solid #4b5563; }
.start { width: 1248px; height: 78px; flex: none; margin-top: 24px; padding-bottom: 2px; border: 3px solid #eab308; border-radius: 12px; color: #d1d5db; font-weight: 500; }
h3 { margin-top: 48px; font-size: 27px; line-height: 42px; font-weight: 600; color: #f3f4f6; }
.chips { display: flex; gap: 12px; margin-top: 24px; }
.chips span { height: 62px; line-height: 60px; padding: 0 30px; border: 1px solid #4b5563; border-radius: 31px; background: #374151; color: #d1d5db; }
.scroll { width: 25px; flex: none; background: #424242; display: flex; flex-direction: column; align-items: center; padding: 10px 0 9px; }
.thumb { width: 21px; height: 347px; margin: 9px 0 auto; background: #686868; }

/* Taskbar */
.taskbar { height: 72px; flex: none; border-top: 2px solid #6b4b72; background: linear-gradient(90deg, #54304f 0, #573361 250px, #5a3568 600px, #65437c 850px, #6f346a 1060px, #5c3262 1220px, #523059 1400px, #583565 1720px, #4e3059 1920px); display: flex; }
.apps { display: flex; padding-left: 629.500px; }
.apps > div { width: 66px; height: 70px; position: relative; display: flex; align-items: center; justify-content: center; padding-bottom: 2px; }
.apps > div ~ div:not(.current) { left: 1px; }
.apps b { position: absolute; bottom: 7px; left: 28.500px; width: 9px; height: 5px; border-radius: 3px; background: #b7a0c0; }
.apps .current { width: 60px; margin: 4px 1.500px 6px 4.500px; height: 60px; padding: 0; border: 1px solid #79538b; border-radius: 7px; background: #6b4679; box-shadow: inset -6px 0 0 #633f70, inset -7px 0 0 #79538b; }
.current b { left: 17px; bottom: 0; width: 24px; background: #dbb3dc; }
.vs-blue { --a: #0a6fb8; --b: #0a86d4; --c: #2aa5f0; }
.vs-green { --a: #0bb093; --b: #07937b; --c: #2bc4a6; }
.vs-a { fill: var(--b); }
.vs-b { fill: var(--a); }
.vs-c { fill: var(--c); }
.tray { margin-left: auto; display: flex; align-items: center; padding: 0 31px 2px 0; }
.up { margin-right: 27px; }
.wifi { margin-right: 12px; }
.vol { margin-right: 11px; }
.bat2 { margin-right: 24px; }
.clock { width: 94px; margin-right: 11px; display: flex; flex-direction: column; text-align: right; line-height: 24px; letter-spacing: -.25px; white-space: nowrap; }
```
